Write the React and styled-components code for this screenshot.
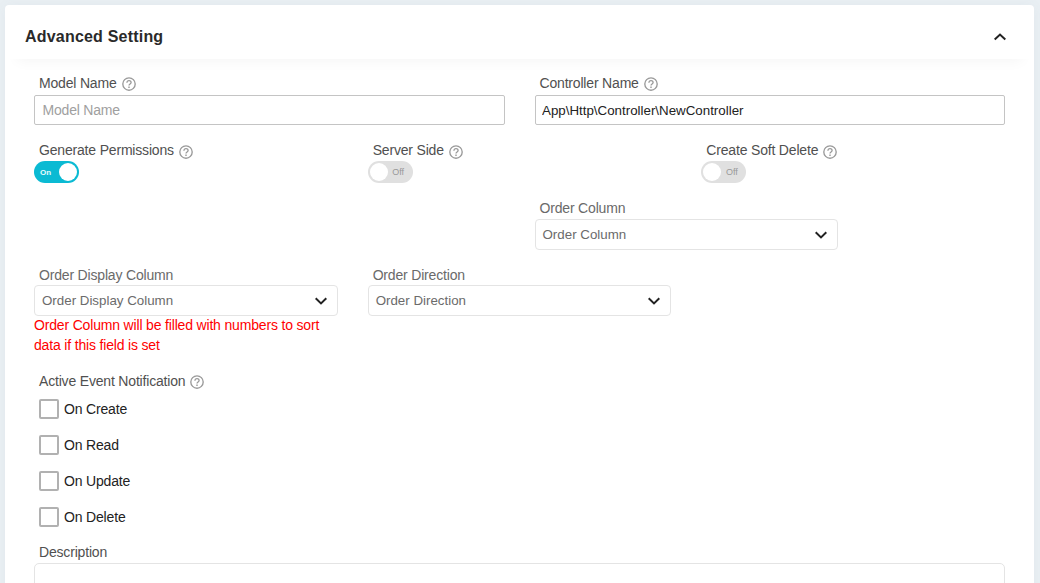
import React, { useState } from "react";
import styled, { createGlobalStyle } from "styled-components";

const Global = createGlobalStyle`
  *, *::before, *::after { box-sizing: border-box; }
  html, body { margin: 0; height: 100%; overflow: hidden; background: #e9eff3; }
  body { font-family: "Liberation Sans", Arial, sans-serif; font-size: 14px; color: #212529; }
`;

const Page = styled.main`
  padding: 5px 6px 0 5px;
  height: 583px;
  overflow: hidden;
`;

const Panel = styled.section`
  background: #fff;
  border-radius: 4px;
  height: 640px;
  box-shadow: 0 0 12px rgba(100, 120, 140, 0.05);
`;

const Header = styled.header`
  display: flex;
  align-items: center;
  justify-content: space-between;
  height: 54px;
  padding: 10px 28px 0 20px;
  border-radius: 4px;
  box-shadow: 0 14px 14px -12px rgba(0, 0, 0, 0.045);
`;

const Title = styled.h2`
  margin: 0;
  font-size: 16px;
  line-height: 20px;
  font-weight: 700;
  letter-spacing: 0.2px;
  color: #2a2a2a;
`;

const Form = styled.div`
  padding: 14px 29px 0;
`;

const Row = styled.div`
  display: grid;
  grid-template-columns: repeat(${(p) => p.$cols}, minmax(0, 1fr));
  column-gap: 30px;
  height: ${(p) => p.$height}px;
`;

const HalfWithSelect = styled.div`
  grid-column: 2;
  padding-right: 167px;
`;

const Label = styled.label`
  display: flex;
  align-items: center;
  height: ${(p) => p.$height || 22}px;
  padding: 0 0 ${(p) => p.$lift ?? 1}px 5px;
  color: ${(p) => (p.$soft ? "#6a6a6a" : "#505050")};
  letter-spacing: -0.18px;
  white-space: nowrap;
`;

const HelpSvg = styled.svg`
  flex: none;
  margin: ${(p) => p.$top || 2}px 0 0 5px;
  color: #999;
`;

const Input = styled.input`
  display: block;
  width: 100%;
  height: 30px;
  padding: 0 6.5px;
  border: 1px solid #c4c4c4;
  border-radius: 2px;
  outline: none;
  font: 13.33px "Liberation Sans", Arial, sans-serif;
  color: #222;
  &::placeholder {
    padding-left: 1px;
    font-size: 14px;
    letter-spacing: -0.2px;
    color: #a0a0a0;
    opacity: 1;
  }
`;

const SelectBox = styled.div`
  display: flex;
  align-items: center;
  justify-content: space-between;
  height: 31px;
  padding: 0 10px 0 7px;
  border: 1px solid #e4e4e4;
  border-radius: 4px;
  font-size: 13.33px;
  color: #6b6b6b;
`;

const Track = styled.button`
  display: flex;
  flex-direction: ${(p) => (p.$on ? "row-reverse" : "row")};
  align-items: center;
  width: 45px;
  height: 22px;
  padding: 0 2px;
  border: 0;
  border-radius: 11px;
  background: ${(p) => (p.$on ? "#0abad3" : "#e0e0e0")};
`;

const Knob = styled.span`
  width: 18px;
  height: 18px;
  border-radius: 50%;
  background: #fff;
`;

const TrackText = styled.span`
  flex: 1;
  padding-right: ${(p) => (p.$on ? 4 : 2)}px;
  font: ${(p) => (p.$on ? "700 8px" : "400 9px")} "Liberation Sans", Arial, sans-serif;
  color: ${(p) => (p.$on ? "#e6fafd" : "#999")};
  text-align: center;
`;

const ErrorText = styled.p`
  margin: -1px 0 0;
  width: 300px;
  line-height: 20px;
  color: #f00;
  letter-spacing: -0.17px;
`;

const CheckList = styled.div`
  display: flex;
  flex-direction: column;
  gap: 16px;
  padding: 7px 0 0 5px;
`;

const CheckItem = styled.label`
  display: flex;
  align-items: center;
  gap: 5px;
  height: 20px;
  letter-spacing: -0.17px;
  color: #222;
`;

const CheckSquare = styled.input`
  appearance: none;
  width: 20px;
  height: 20px;
  margin: 0;
  border: 2px solid #b1b1b1;
  border-radius: 2px;
  background: #fff;
`;

const Events = styled.div`
  height: 171px;
`;

const TextArea = styled.textarea`
  display: block;
  width: 100%;
  height: 70px;
  border: 1px solid #e4e4e4;
  border-radius: 5px;
  resize: none;
  outline: none;
`;

function Help({ top }) {
  return (
    <HelpSvg $top={top} width="14" height="14" viewBox="0 0 14 14" fill="none" stroke="currentColor">
      <circle cx="7" cy="7" r="6.2" strokeWidth="1.35" />
      <path d="M4.9 5.7C4.9 4.4 5.8 3.6 7 3.6s2.1.8 2.1 1.9c0 1.4-2.1 1.5-2.1 3" strokeWidth="1.3" />
      <path d="M7 9.6v1.4" strokeWidth="1.4" />
    </HelpSvg>
  );
}

function Chevron({ up }) {
  return (
    <svg width="12" height="8" viewBox="0 0 12 8" fill="none" stroke="#222" strokeWidth="2">
      <path d={up ? "M.7 6.6 6 1.6l5.3 5" : "M.7 1.3 6 6.4l5.3-5.1"} />
    </svg>
  );
}

function Toggle({ initial = false }) {
  const [on, setOn] = useState(initial);
  return (
    <Track type="button" $on={on} onClick={() => setOn(!on)}>
      <Knob />
      <TrackText $on={on}>{on ? "On" : "Off"}</TrackText>
    </Track>
  );
}

function Select({ text }) {
  return (
    <SelectBox>
      <span>{text}</span>
      <Chevron />
    </SelectBox>
  );
}

export default function App() {
  return (
    <>
      <Global />
      <Page>
        <Panel>
          <Header>
            <Title>Advanced Setting</Title>
            <Chevron up />
          </Header>
          <Form>
            <Row $cols={2} $height={66}>
              <div>
                <Label $lift={3}>Model Name<Help /></Label>
                <Input placeholder="Model Name" />
              </div>
              <div>
                <Label $lift={3}>Controller Name<Help /></Label>
                <Input defaultValue="App\Http\Controller\NewController" />
              </div>
            </Row>
            <Row $cols={3} $height={59}>
              <div><Label>Generate Permissions<Help top={4} /></Label><Toggle initial /></div>
              <div><Label>Server Side<Help top={4} /></Label><Toggle /></div>
              <div><Label>Create Soft Delete<Help top={4} /></Label><Toggle /></div>
            </Row>
            <Row $cols={2} $height={66}>
              <HalfWithSelect>
                <Label $soft $height={21}>Order Column</Label>
                <Select text="Order Column" />
              </HalfWithSelect>
            </Row>
            <Row $cols={3} $height={106}>
              <div>
                <Label $soft $height={21} $lift={0}>Order Display Column</Label>
                <Select text="Order Display Column" />
                <ErrorText>Order Column will be filled with numbers to sort data if this field is set</ErrorText>
              </div>
              <div>
                <Label $soft $height={21} $lift={0}>Order Direction</Label>
                <Select text="Order Direction" />
              </div>
            </Row>
            <Events>
              <Label>Active Event Notification<Help /></Label>
              <CheckList>
                {["On Create", "On Read", "On Update", "On Delete"].map((t) => (
                  <CheckItem key={t}><CheckSquare type="checkbox" />{t}</CheckItem>
                ))}
              </CheckList>
            </Events>
            <Label>Description</Label>
            <TextArea />
          </Form>
        </Panel>
      </Page>
    </>
  );
}
